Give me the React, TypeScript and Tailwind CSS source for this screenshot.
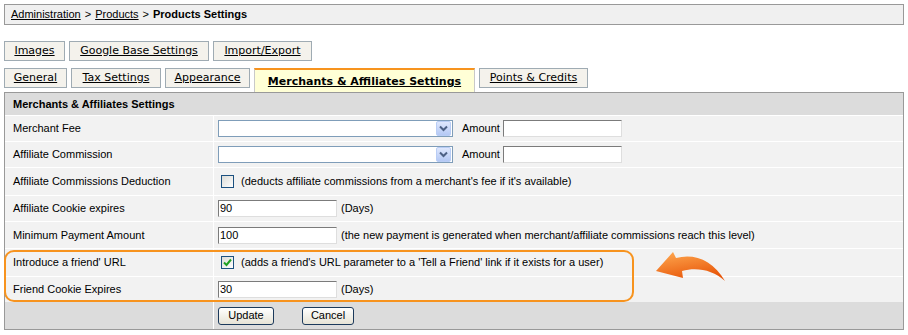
import React from "react";

const sans = "font-['Liberation_Sans',Arial,sans-serif]";
const verdana = "font-['DejaVu_Sans',Verdana,sans-serif]";

const Tab = ({ label, w }: { label: string; w: string }) => (
    <div className={`${w} shrink-0 h-[20px] border border-[#9fabb3] bg-[#f4f2ec] flex items-center justify-center text-[11px] ${verdana} text-black`}>
        <span className="underline whitespace-nowrap">{label}</span>
    </div>
);

const Select = () => (
    <div className="w-[235px] h-[17px] border border-[#7f9db9] bg-white flex justify-end items-center pr-[1px]">
        <div className="w-[15px] h-[15px] rounded-[2px] border border-[#b9cdf5] bg-gradient-to-b from-[#dfe8fd] to-[#b4c8f4] flex items-center justify-center">
            <svg width="9" height="7" viewBox="0 0 9 7">
                <path d="M1 1.5 L4.5 5 L8 1.5" fill="none" stroke="#4d6185" strokeWidth="2" />
            </svg>
        </div>
    </div>
);

const TextInput = ({ value }: { value?: string }) => (
    <div className={`w-[119px] h-[17px] border border-t-[#7b7b7b] border-l-[#7b7b7b] border-r-[#dedede] border-b-[#dedede] bg-white pl-[1px] text-[11px] leading-[15px] text-black ${sans}`}>
        {value}
    </div>
);

const Checkbox = ({ checked }: { checked?: boolean }) => (
    <div className="w-[13px] h-[13px] border border-[#1c5180] bg-gradient-to-br from-[#dcdcd7] to-white flex items-center justify-center">
        {checked && (
            <svg width="9" height="9" viewBox="0 0 9 9">
                <path d="M1 4.5 L3.5 7 L8 1.5" fill="none" stroke="#21a121" strokeWidth="2" />
            </svg>
        )}
    </div>
);

const Row = ({ label, h, last, children }: { label: string; h: string; last?: boolean; children: React.ReactNode }) => (
    <div className={`flex ${h} ${last ? "" : "border-b border-white"} bg-[#f2f2f2]`}>
        <div className="w-[208px] pl-[8px] flex items-center">{label}</div>
        <div className="w-px bg-white" />
        <div className="flex-1 pl-[4px] flex items-center">{children}</div>
    </div>
);

const Button = ({ label, w }: { label: string; w: string }) => (
    <div className={`${w} h-[18px] rounded-[3px] border border-[#1c3a5c] bg-gradient-to-b from-white to-[#e6e3d6] flex items-center justify-center text-[11px] text-black ${sans}`}>
        {label}
    </div>
);

const App: React.FC = () => {
    return (
        <div className={`w-[908px] h-[335px] bg-white px-[4px] pt-[4px] text-[11px] text-black ${sans}`}>

            {/* breadcrumb */}
            <div className="w-[900px] h-[21px] border border-[#999] bg-[#f0f0f0] pl-[6px] flex items-center">
                <span className="underline">Administration</span>
                <span className="mx-[4px]">&gt;</span>
                <span className="underline">Products</span>
                <span className="mx-[4px]">&gt;</span>
                <span className="font-bold">Products Settings</span>
            </div>

            <div className="flex gap-[4px] mt-[16px]">
                <Tab label="Images" w="w-[61px]" />
                <Tab label="Google Base Settings" w="w-[140px]" />
                <Tab label="Import/Export" w="w-[99px]" />
            </div>

            <div className="flex items-start gap-[4px] mt-[7px] h-[24px]">
                <Tab label="General" w="w-[63px]" />
                <Tab label="Tax Settings" w="w-[90px]" />
                <Tab label="Appearance" w="w-[85px]" />
                <div className={`w-[221px] shrink-0 h-[24px] border-x border-[#c9c9c9] border-t-2 border-t-[#f7931e] bg-[#ffffd6] flex items-center justify-center pt-[3px] text-[11px] font-bold ${verdana}`}>
                    <span className="underline whitespace-nowrap">Merchants &amp; Affiliates Settings</span>
                </div>
                <Tab label="Points & Credits" w="w-[109px]" />
            </div>

            {/* settings panel */}
            <div className="relative w-[900px] border border-[#999]">
                <div className="h-[23px] bg-[#dcdcdc] border-b border-white pl-[8px] flex items-center font-bold">
                    Merchants &amp; Affiliates Settings
                </div>

                <Row label="Merchant Fee" h="h-[26px]">
                    <Select />
                    <span className="ml-[9px] mr-[3px]">Amount</span>
                    <TextInput />
                </Row>
                <Row label="Affiliate Commission" h="h-[26px]">
                    <Select />
                    <span className="ml-[9px] mr-[3px]">Amount</span>
                    <TextInput />
                </Row>
                <Row label="Affiliate Commissions Deduction" h="h-[28px]">
                    <div className="ml-[3px]"><Checkbox /></div>
                    <span className="ml-[7px]">(deducts affiliate commissions from a merchant's fee if it's available)</span>
                </Row>
                <Row label="Affiliate Cookie expires" h="h-[26px]">
                    <TextInput value="90" />
                    <span className="ml-[4px]">(Days)</span>
                </Row>
                <Row label="Minimum Payment Amount" h="h-[27px]">
                    <TextInput value="100" />
                    <span className="ml-[4px]">(the new payment is generated when merchant/affiliate commissions reach this level)</span>
                </Row>
                <Row label="Introduce a friend' URL" h="h-[28px]">
                    <div className="ml-[3px]"><Checkbox checked /></div>
                    <span className="ml-[7px]">(adds a friend's URL parameter to a 'Tell a Friend' link if it exists for a user)</span>
                </Row>
                <Row label="Friend Cookie Expires" h="h-[25px]" last>
                    <TextInput value="30" />
                    <span className="ml-[4px]">(Days)</span>
                </Row>

                <div className="flex h-[27px] bg-[#dcdcdc]">
                    <div className="w-[208px]" />
                    <div className="w-px bg-white" />
                    <div className="flex items-center pl-[4px] gap-[28px]">
                        <Button label="Update" w="w-[56px]" />
                        <Button label="Cancel" w="w-[52px]" />
                    </div>
                </div>

                {/* highlight annotation */}
                <div className="absolute left-[-1px] top-[157px] w-[630px] h-[52px] border-2 border-[#f7931e] rounded-[10px] pointer-events-none" />
                <svg className="absolute left-[645px] top-[155px]" width="80" height="40" viewBox="0 0 80 40">
                    <defs>
                        <linearGradient id="arr" x1="0" y1="0" x2="0.4" y2="1">
                            <stop offset="0" stopColor="#ffab52" />
                            <stop offset="1" stopColor="#e8570a" />
                        </linearGradient>
                    </defs>
                    <path d="M6 23 L23 4 L26 10 C44 5 63 12 75 33 C63 22 47 19 32 23 L33 30 Z" fill="url(#arr)" />
                </svg>
            </div>
        </div>
    );
};

export default App;
